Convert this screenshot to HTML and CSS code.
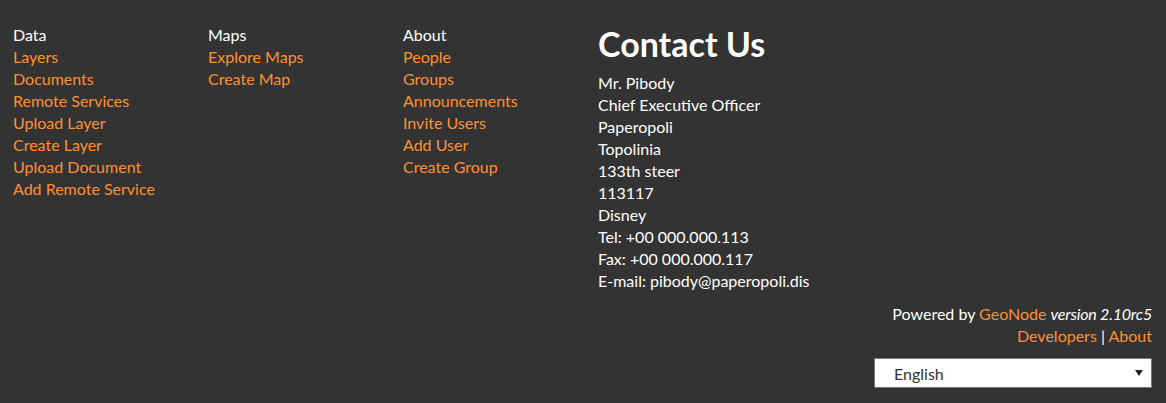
FILE: index.html
```html
<!DOCTYPE html>
<html>
<head>
<meta charset="utf-8">
<link rel="stylesheet" href="styles.css">
</head>
<body>
<footer class="footer">
  <div class="cols">
    <ul class="col">
      <li class="head">Data</li>
      <li><a href="#">Layers</a></li>
      <li><a href="#">Documents</a></li>
      <li><a href="#">Remote Services</a></li>
      <li><a href="#">Upload Layer</a></li>
      <li><a href="#">Create Layer</a></li>
      <li><a href="#">Upload Document</a></li>
      <li><a href="#">Add Remote Service</a></li>
    </ul>
    <ul class="col">
      <li class="head">Maps</li>
      <li><a href="#">Explore Maps</a></li>
      <li><a href="#">Create Map</a></li>
    </ul>
    <ul class="col">
      <li class="head">About</li>
      <li><a href="#">People</a></li>
      <li><a href="#">Groups</a></li>
      <li><a href="#">Announcements</a></li>
      <li><a href="#">Invite Users</a></li>
      <li><a href="#">Add User</a></li>
      <li><a href="#">Create Group</a></li>
    </ul>
    <div class="contact">
      <h1>Contact Us</h1>
      <ul class="col">
        <li>Mr. Pibody</li>
        <li>Chief Executive Officer</li>
        <li>Paperopoli</li>
        <li>Topolinia</li>
        <li>133th steer</li>
        <li>113117</li>
        <li>Disney</li>
        <li>Tel: +00 000.000.113</li>
        <li>Fax: +00 000.000.117</li>
        <li>E-mail: pibody@paperopoli.dis</li>
      </ul>
    </div>
  </div>
  <div class="powered">
    <p>Powered by <a href="#">GeoNode</a> <em>version 2.10rc5</em></p>
    <p><a href="#">Developers</a> | <a href="#">About</a></p>
    <div class="lang">
      <div class="select">English</div>
      <svg class="arrow" width="8" height="6" viewBox="0 0 8 6"><path d="M0 0H8L4 6Z" fill="#222"/></svg>
    </div>
  </div>
</footer>
</body>
</html>
```

FILE: styles.css
```css
html, body {
  margin: 0;
  padding: 0;
  background: #333333;
}
body {
  font-family: Lato, "Liberation Sans", sans-serif;
  font-size: 16px;
  line-height: 22px;
  color: #ffffff;
}
.footer {
  padding: 24px 14px 15px 13px;
}
.cols {
  display: grid;
  grid-template-columns: 195px 195px 195px 1fr;
}
.col {
  list-style: none;
  margin: 0;
  padding: 0;
}
a {
  color: #ff8f31;
  text-decoration: none;
}
.contact h1 {
  margin: 0 0 8px 0;
  font-size: 34px;
  line-height: 40px;
  font-weight: 700;
}
.powered {
  margin-top: 11px;
  display: flex;
  flex-direction: column;
  align-items: flex-end;
}
.powered p {
  margin: 0;
}
.powered em {
  font-style: italic;
  letter-spacing: -0.2px;
}
.lang {
  position: relative;
  margin-top: 11px;
  width: 278px;
}
.select {
  box-sizing: border-box;
  height: 30px;
  border: 1px solid #777777;
  background: #ffffff;
  color: #333333;
  padding: 4px 20px 0 19px;
  line-height: 22px;
}
.arrow {
  position: absolute;
  right: 9px;
  top: 12px;
}
```
